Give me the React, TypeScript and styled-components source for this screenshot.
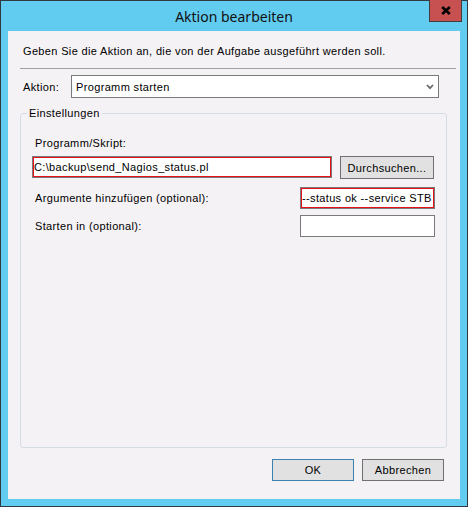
import React from 'react';
import styled, { createGlobalStyle } from 'styled-components';

const GlobalStyle = createGlobalStyle`
  html, body {
    margin: 0;
    padding: 0;
    background: #ffffff;
  }
  body {
    font-family: 'Liberation Sans', Arial, sans-serif;
  }
`;

const Window = styled.div`
  width: 468px;
  height: 507px;
  box-sizing: border-box;
  border: 1px solid #2e3a40;
  background: #62cbf0;
  display: flex;
  flex-direction: column;
  padding: 0 7px 7px;
`;

const TitleBar = styled.div`
  position: relative;
  height: 30px;
  margin: 0 -7px;
  display: flex;
  align-items: center;
  justify-content: center;
`;

const Title = styled.span`
  font-family: 'Noto Sans', 'Open Sans', sans-serif;
  font-size: 14px;
  color: #111;
  padding-top: 1px;
`;

const CloseButton = styled.div`
  position: absolute;
  top: -1px;
  right: 5px;
  width: 33px;
  height: 22px;
  box-sizing: border-box;
  background: #c75050;
  border: 1px solid #3e3e3e;
  border-top: none;
  display: flex;
  align-items: center;
  justify-content: center;
  padding-bottom: 1px;
`;

const Client = styled.div`
  flex: 1;
  background: #f5f2f5;
  display: flex;
  flex-direction: column;
  font-size: 11px;
  line-height: 14px;
  letter-spacing: 0.35px;
  color: #000;
`;

const Intro = styled.div`
  padding: 13px 15px 0;
  white-space: nowrap;
`;

const Separator = styled.div`
  height: 1px;
  margin: 10px 4px 0 12px;
  background: #a0a0a0;
`;

const ActionRow = styled.div`
  display: grid;
  grid-template-columns: 48px 368px;
  align-items: center;
  margin-top: 6px;
  padding-left: 15px;
`;

const Combo = styled.div`
  height: 23px;
  box-sizing: border-box;
  border: 1px solid #7a7a7a;
  background: #fff;
  display: flex;
  align-items: center;
  justify-content: space-between;
  padding: 0 4px 0 4px;
`;

const Group = styled.fieldset`
  flex: 1;
  min-width: 0;
  margin: 8px 13px 0 12px;
  padding: 0;
  border: 1px solid #d5dde4;
  border-radius: 3px;
  display: flex;
  flex-direction: column;
`;

const Legend = styled.legend`
  margin-left: 6px;
  padding: 0 2px;
  line-height: 14px;
`;

const GroupBody = styled.div`
  padding: 16px 0 0 11px;
  display: flex;
  flex-direction: column;
`;

const Label = styled.span`
  padding-left: 3px;
  white-space: nowrap;
`;

const ProgramRow = styled.div`
  display: flex;
  align-items: flex-start;
  gap: 8px;
  margin-top: 6px;
`;

const FieldRow = styled.div<{ $gap: number }>`
  display: grid;
  grid-template-columns: 268px 135px;
  align-items: center;
  margin-top: ${(p) => p.$gap}px;
`;

const TextBox = styled.input<{ $invalid?: boolean; $width: number }>`
  width: ${(p) => p.$width}px;
  height: 22px;
  box-sizing: border-box;
  margin: 0;
  padding: 0 1px;
  border: 1px solid #7a7a7a;
  border-radius: 0;
  background: #fff;
  box-shadow: ${(p) => (p.$invalid ? 'inset 0 0 0 1px #e8101a' : 'none')};
  font: inherit;
  font-size: 11px;
  letter-spacing: 0.35px;
  color: #000;
  outline: none;
`;

const Button = styled.button<{ $width: number; $default?: boolean }>`
  width: ${(p) => p.$width}px;
  height: ${(p) => (p.$default === undefined ? 23 : 22)}px;
  box-sizing: border-box;
  margin: 0;
  padding: 0;
  border: 1px solid ${(p) => (p.$default ? '#3c7fb1' : '#707070')};
  border-radius: 0;
  background: #e1e1e1;
  font: inherit;
  font-size: 11px;
  letter-spacing: 0.35px;
  color: #000;
`;

const Footer = styled.div`
  display: flex;
  justify-content: flex-end;
  gap: 8px;
  padding: 11px 16px 18px 0;
`;

const CloseIcon = () => (
  <svg width="10" height="9" viewBox="0 0 10 9">
    <path d="M1.2 1 L8.8 8 M8.8 1 L1.2 8" stroke="#000" strokeWidth="2.6" fill="none" />
  </svg>
);

const Chevron = () => (
  <svg width="8" height="6" viewBox="0 0 8 6">
    <path d="M1 1 L4 4.2 L7 1" stroke="#6a6a6a" strokeWidth="1.8" fill="none" />
  </svg>
);

const App = () => (
  <>
    <GlobalStyle />
    <Window>
      <TitleBar>
        <Title>Aktion bearbeiten</Title>
        <CloseButton>
          <CloseIcon />
        </CloseButton>
      </TitleBar>
      <Client>
        <Intro>Geben Sie die Aktion an, die von der Aufgabe ausgeführt werden soll.</Intro>
        <Separator />
        <ActionRow>
          <span>Aktion:</span>
          <Combo>
            <span>Programm starten</span>
            <Chevron />
          </Combo>
        </ActionRow>
        <Group>
          <Legend>Einstellungen</Legend>
          <GroupBody>
            <Label>Programm/Skript:</Label>
            <ProgramRow>
              <TextBox $invalid $width={300} readOnly defaultValue="C:\backup\send_Nagios_status.pl" />
              <Button $width={94}>Durchsuchen...</Button>
            </ProgramRow>
            <FieldRow $gap={8}>
              <Label>Argumente hinzufügen (optional):</Label>
              <TextBox $invalid $width={135} readOnly defaultValue="--status ok --service STB" />
            </FieldRow>
            <FieldRow $gap={6}>
              <Label>Starten in (optional):</Label>
              <TextBox $width={135} readOnly defaultValue="" />
            </FieldRow>
          </GroupBody>
        </Group>
        <Footer>
          <Button $width={82} $default>OK</Button>
          <Button $width={82} $default={false}>Abbrechen</Button>
        </Footer>
      </Client>
    </Window>
  </>
);

export default App;
